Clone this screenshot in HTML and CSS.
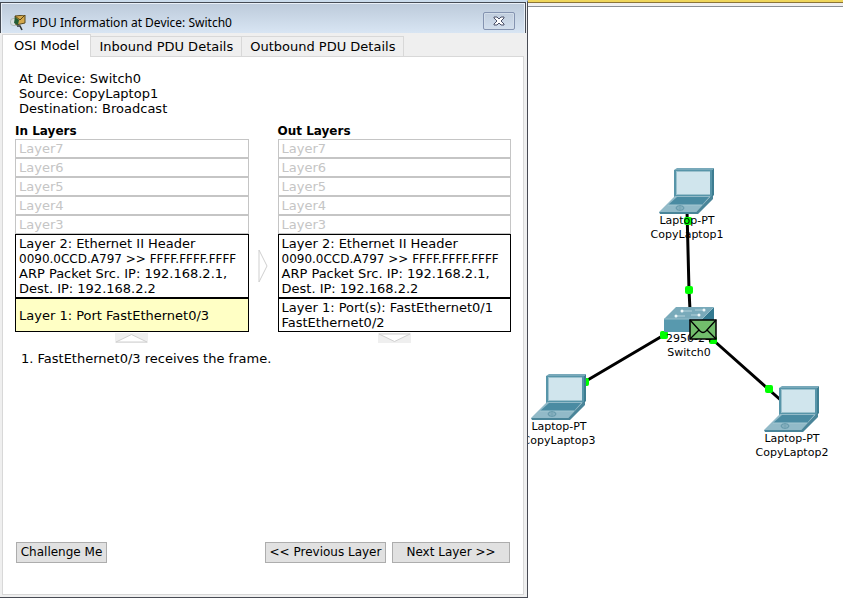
FILE: index.html
```html
<!DOCTYPE html>
<html lang="en">
<head>
<meta charset="utf-8">
<title>PDU Information at Device: Switch0</title>
<link rel="stylesheet" href="styles.css">
</head>
<body>
<svg class="symbols" width="0" height="0" aria-hidden="true">
  <symbol id="laptop" viewBox="0 0 56 46">
    <path d="M15 2 18 0H55L53 2Z" fill="#78a9ba"/>
    <path d="M53 2 55 0V27L52 30Z" fill="#3d7d91"/>
    <rect x="15" y="2" width="38" height="27" fill="#5795a9"/>
    <rect x="17" y="3" width="34" height="24" fill="#9bc1cd"/>
    <rect x="18" y="4" width="33" height="22" fill="#d0e5ed"/>
    <path d="M16 28H52L37 44H0Z" fill="#92bac8"/>
    <path d="M18 29H50L43 37H9Z" fill="#4a8ba2"/>
    <path d="M52 28H54V31L39 46H1L0 44H37Z" fill="#4a8599"/>
    <path d="M9 37H43" stroke="#a4c7d2"/>
    <ellipse cx="21" cy="40" rx="4" ry="2.3" fill="none" stroke="#5f94a6"/>
    <path d="M18 40H24M21 38V42" stroke="#6b9cad" stroke-width=".7"/>
  </symbol>
</svg>
<main class="desktop">
  <section class="dialog">
    <header class="titlebar">
      <svg class="app-icon" width="16" height="16" viewBox="0 0 16 16" aria-hidden="true">
        <circle cx="4" cy="7" r="3.7" fill="#d8dfdf" stroke="#aebaba"/>
        <path d="M5 1 15 0V8L6 10Z" fill="#d4a84b" stroke="#5a4a20"/>
        <path d="M5 1 10 5 15 0" fill="none" stroke="#594719"/>
        <path d="M5 2 9 5 8 10 4 8Z" fill="#235d34"/>
        <path d="M7 11H10L12 15" fill="none" stroke="#303636" stroke-width="1.6"/>
      </svg>
      <h1 class="title">PDU Information at Device: Switch0</h1>
      <button class="close" type="button" aria-label="Close">
        <svg width="12" height="10" viewBox="0 0 12 10" aria-hidden="true">
          <path d="M1 1H4L6 3 8 1H11V2L8 5 11 8V9H8L6 7 4 9H1V8L4 5 1 2Z" fill="#fff" stroke="#4b5068"/>
        </svg>
      </button>
    </header>
    <div class="body">
      <nav class="tabs">
        <button class="tab tab-active" type="button">OSI Model</button>
        <button class="tab" type="button">Inbound PDU Details</button>
        <button class="tab" type="button">Outbound PDU Details</button>
      </nav>
      <div class="panel">
        <p class="info">At Device: Switch0<br>Source: CopyLaptop1<br>Destination: Broadcast</p>
        <div class="stacks">
          <section class="stack">
            <h2 class="heading">In Layers</h2>
            <div class="layer off">Layer7</div>
            <div class="layer off">Layer6</div>
            <div class="layer off">Layer5</div>
            <div class="layer off">Layer4</div>
            <div class="layer off">Layer3</div>
            <div class="layer">Layer 2: Ethernet II Header<br><span class="address">0090.0CCD.A797 &gt;&gt; FFFF.FFFF.FFFF</span><br>ARP Packet Src. IP: 192.168.2.1,<br>Dest. IP: 192.168.2.2</div>
            <div class="layer port current">Layer 1: Port FastEthernet0/3</div>
            <svg class="flow" width="33" height="10" viewBox="0 0 33 10" aria-hidden="true"><path d="M0 0H33V10H0Z" fill="#efefef"/><path d="M1 9 16.500 1.500 32 9Z" fill="#fff" stroke="#d0d0d0"/></svg>
          </section>
          <svg class="across" width="10" height="34" viewBox="0 0 10 34" aria-hidden="true"><path d="M1 1 9 17 1 33Z" fill="#fff" stroke="#cfcfcf"/></svg>
          <section class="stack">
            <h2 class="heading">Out Layers</h2>
            <div class="layer off">Layer7</div>
            <div class="layer off">Layer6</div>
            <div class="layer off">Layer5</div>
            <div class="layer off">Layer4</div>
            <div class="layer off">Layer3</div>
            <div class="layer">Layer 2: Ethernet II Header<br><span class="address">0090.0CCD.A797 &gt;&gt; FFFF.FFFF.FFFF</span><br>ARP Packet Src. IP: 192.168.2.1,<br>Dest. IP: 192.168.2.2</div>
            <div class="layer port">Layer 1: Port(s): FastEthernet0/1<br>FastEthernet0/2</div>
            <svg class="flow" width="33" height="10" viewBox="0 0 33 10" aria-hidden="true"><path d="M0 0H33V10H0Z" fill="#efefef"/><path d="M1 1 16.500 8.500 32 1Z" fill="#fff" stroke="#d0d0d0"/></svg>
          </section>
        </div>
        <p class="step">1. FastEthernet0/3 receives the frame.</p>
        <footer class="actions">
          <button class="action challenge" type="button">Challenge Me</button>
          <button class="action previous" type="button">&lt;&lt; Previous Layer</button>
          <button class="action next" type="button">Next Layer &gt;&gt;</button>
        </footer>
      </div>
    </div>
  </section>
  <section class="workspace">
    <div class="ribbon"></div>
    <div class="canvas">
      <svg class="links" width="315" height="591" viewBox="0 7 315 591" aria-hidden="true">
        <g stroke="#000" stroke-width="3">
          <path d="M159 210 161 290 162 310M136 335 58 381M184 339 256 403"/>
        </g>
        <g fill="#00ff00">
          <rect x="156" y="217" width="8" height="8" rx="2"/>
          <rect x="157" y="286" width="8" height="8" rx="2"/>
          <rect x="132" y="331" width="8" height="8" rx="2"/>
          <rect x="53" y="378" width="8" height="8" rx="2"/>
          <rect x="181" y="336" width="8" height="8" rx="2"/>
          <rect x="237" y="385" width="8" height="8" rx="2"/>
        </g>
      </svg>
      <div class="node laptop1"><svg width="56" height="46"><use href="#laptop"/></svg><span>Laptop-PT<br>CopyLaptop1</span></div>
      <div class="node laptop2"><svg width="56" height="46"><use href="#laptop"/></svg><span>Laptop-PT<br>CopyLaptop2</span></div>
      <div class="node laptop3"><svg width="56" height="46"><use href="#laptop"/></svg><span>Laptop-PT<br>CopyLaptop3</span></div>
      <div class="node switch">
        <svg width="50" height="25" viewBox="0 0 50 25">
          <path d="M12 0H50L38 12H0Z" fill="#79aaba"/>
          <path d="M0 12H38V25H0Z" fill="#5899ae"/>
          <path d="M50 0V13L38 25V12Z" fill="#347a91"/>
          <path d="M0 12H38L50 0" fill="none" stroke="#94bdca"/>
          <g fill="none" stroke="#b5d2db"><path d="M19 4H28M12 9H21M31 3H40M27 8H35"/></g>
          <g fill="#eef7f9"><circle cx="18" cy="4" r="1.500"/><circle cx="12" cy="9" r="1.500"/><circle cx="40" cy="3" r="1.500"/><circle cx="35" cy="8" r="1.500"/></g>
        </svg>
        <span>2950-24<br>Switch0</span>
      </div>
      <svg class="envelope" width="28" height="21" viewBox="0 0 28 21" aria-hidden="true">
        <rect x="1" y="1" width="26" height="19" fill="#72bd6c" stroke="#000" stroke-width="1.500"/>
        <path d="M1 1 11 12Q14 15 17 12L27 1M1 20 10 11M27 20 18 11" fill="none" stroke="#000" stroke-width="1.300"/>
      </svg>
    </div>
  </section>
</main>
</body>
</html>
```
FILE: styles.css
```css
* { box-sizing: border-box; }

body, h1, h2, p { margin: 0; }

body {
  background: #fff;
  color: #000;
  font: 13px/15px Verdana, "DejaVu Sans", sans-serif;
}

button {
  padding: 0;
  color: inherit;
  font: inherit;
  white-space: nowrap;
}

svg { display: block; }

.symbols { position: absolute; }

.desktop {
  display: grid;
  grid-template-columns: minmax(0, 528fr) minmax(0, 315fr);
  min-height: 100vh;
}

.dialog {
  display: flex;
  flex-direction: column;
  border-top: 2px solid #cbdcec;
  border-right: 1px solid #484b54;
  border-bottom: 1px solid #484b54;
  background: #efefef;
}

.titlebar {
  display: flex;
  align-items: center;
  gap: 6px;
  height: 31px;
  margin-right: 1px;
  padding: 9px 10px 0 9px;
  border: 1px solid #454b54;
  border-bottom: 0;
  background: linear-gradient(#bccada, #d8e5f3);
  box-shadow: inset 1px 1px #e9f0f8, inset -1px 0 #e9f0f8;
}

.title {
  flex: 1;
  font: 12px/16px "Noto Sans", sans-serif;
}

.close {
  display: grid;
  place-items: center;
  width: 32px;
  height: 18px;
  margin-bottom: 4px;
  border: 1px solid #8493b0;
  border-radius: 2px;
  background: linear-gradient(#c0cddd, #d2dfee);
  box-shadow: inset 0 0 0 1px #d3deea;
}

.body {
  display: flex;
  flex: 1;
  flex-direction: column;
  padding: 1px 3px 2px 2px;
}

.tabs {
  display: flex;
  align-items: flex-end;
  height: 22px;
}

.tab {
  height: 20px;
  padding: 0 8px;
  border: 1px solid #d8d8d8;
  border-width: 1px 1px 0 0;
  background: #efefef;
}

.tab-active {
  z-index: 1;
  height: 23px;
  margin-bottom: -1px;
  padding: 0 11px 2px;
  border-left-width: 1px;
  background: #fff;
}

.panel {
  display: flex;
  flex: 1;
  flex-direction: column;
  padding: 14px 12px 31px;
  border: 1px solid #d8d8d8;
  background: #fff;
}

.info { padding-left: 4px; }

.stacks {
  display: grid;
  grid-template-columns: minmax(0, 1fr) 29px minmax(0, 1fr);
  margin-top: 8px;
}

.heading {
  font-size: 12px;
  line-height: 15px;
}

.layer {
  padding: 1px 3px;
  border: 1px solid #000;
  white-space: nowrap;
}

.address {
  font-size: 12px;
  line-height: 12px;
}

.off {
  border-color: #c5c5c5;
  color: #c5c5c5;
}

.port {
  display: flex;
  align-items: center;
  min-height: 34px;
}

.current { background: #ffffc5; }

.flow { margin: 1px auto 0; }

.across {
  align-self: start;
  margin: 125px auto 0;
}

.step {
  margin-top: 8px;
  padding-left: 6px;
}

.actions {
  display: flex;
  gap: 6px;
  margin-top: auto;
  padding: 0 1px;
}

.action {
  height: 21px;
  border: 1px solid #adadad;
  background: #e1e1e1;
  font-size: 12px;
}

.challenge {
  width: 91px;
  margin-right: auto;
}

.previous { width: 121px; }

.next { width: 118px; }

.workspace {
  display: flex;
  flex-direction: column;
  overflow: hidden;
}

.ribbon {
  height: 7px;
  border-bottom: 1px solid #8a8e93;
  background: linear-gradient(#efd65c 0 2px, #8b7437 2px 3px, #f0f0f0 3px);
}

.canvas {
  position: relative;
  flex: 1;
}

.links {
  position: absolute;
  top: 0;
  left: 0;
}

.node {
  position: absolute;
  display: flex;
  flex-direction: column;
  align-items: center;
  width: 90px;
  font-size: 11px;
  line-height: 14px;
  text-align: center;
}

.laptop1 { top: 161px; left: 114px; }
.laptop2 { top: 379px; left: 219px; }
.laptop3 { top: 367px; left: -14px; }
.switch { top: 300px; left: 116px; }

.envelope {
  position: absolute;
  top: 312px;
  left: 161px;
}
```
